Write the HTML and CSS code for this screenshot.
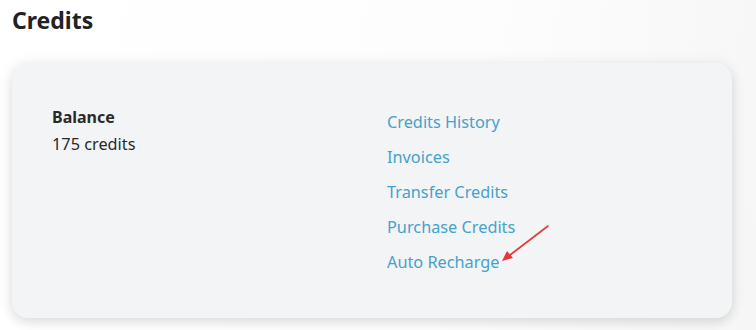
FILE: index.html
```html
<!DOCTYPE html>
<html>
<head>
<meta charset="utf-8">
<link rel="stylesheet" href="styles.css">
</head>
<body>
<main class="page">
  <h1 class="title">Credits</h1>
  <section class="card">
    <div class="balance">
      <div class="balance-label">Balance</div>
      <div class="balance-value">175 credits</div>
    </div>
    <nav class="links">
      <a class="link" href="#">Credits History</a>
      <a class="link" href="#">Invoices</a>
      <a class="link" href="#">Transfer Credits</a>
      <a class="link" href="#">Purchase Credits</a>
      <a class="link link-last" href="#">Auto Recharge</a>
      <svg class="arrow" width="60" height="50" viewBox="0 0 60 50">
        <line x1="52" y1="4" x2="14" y2="33" stroke="#e53935" stroke-width="1.6" stroke-linecap="round"/>
        <polygon points="6,39 11,29 17,36" fill="#e53935"/>
      </svg>
    </nav>
  </section>
</main>
</body>
</html>
```
FILE: styles.css
```css
html, body {
  margin: 0;
  padding: 0;
}
body {
  width: 756px;
  height: 330px;
  overflow: hidden;
  background: linear-gradient(100deg, #ffffff 0%, #fdfdfd 60%, #f6f6f6 100%);
  font-family: "Noto Sans", "Open Sans", sans-serif;
  color: #222;
}
.page {
  padding: 5px 24px 0 12px;
}
.title {
  margin: 0;
  font-size: 23px;
  font-weight: 700;
  line-height: 30px;
  color: #222;
}
.card {
  margin-top: 28px;
  height: 255px;
  box-sizing: border-box;
  background: #f3f4f6;
  border-radius: 16px;
  box-shadow: 0 4px 12px rgba(0,0,0,0.12), 0 0 20px rgba(0,0,0,0.04);
  display: grid;
  grid-template-columns: 335px 1fr;
  padding: 42px 40px 0 40px;
}
.balance-label {
  font-weight: 700;
  font-size: 16px;
  line-height: 24px;
  color: #2a2a2a;
}
.balance-value {
  font-size: 16.3px;
  line-height: 31px;
  color: #2a2a2a;
}
.links {
  position: relative;
  display: flex;
  flex-direction: column;
  align-items: flex-start;
  gap: 11px;
  padding-top: 5px;
}
.link {
  font-size: 16.3px;
  line-height: 24px;
  color: #45a2cc;
  text-decoration: none;
}
.arrow {
  position: absolute;
  left: 109px;
  top: 117px;
}
```
